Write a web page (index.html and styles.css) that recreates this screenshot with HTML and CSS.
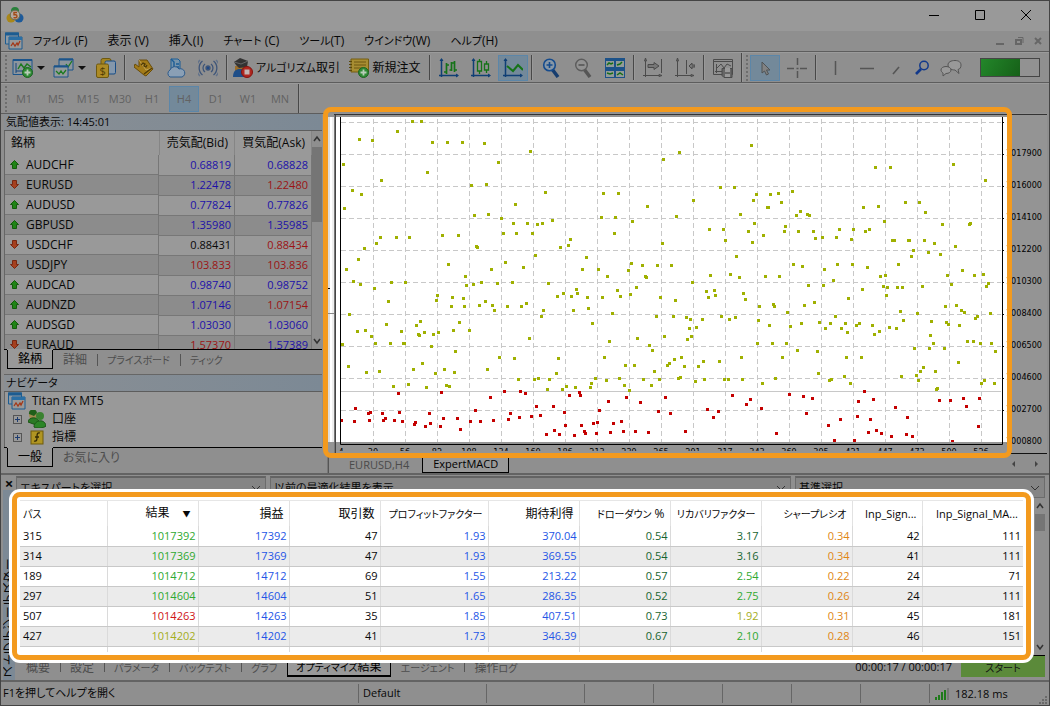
FILE: index.html
```
<!DOCTYPE html>
<html lang="ja">
<head>
  <meta charset="UTF-8" />
  <meta name="viewport" content="width=device-width, initial-scale=1.0"/>
  <title>Titan FX MT5</title>
  <link rel="stylesheet" href="styles.css">
</head>
<body>
<div class="app">

<header class="titlebar">
  <svg class="logo" viewBox="0 0 18 18"><circle cx="9" cy="5" r="4" fill="#27803a"/><circle cx="5" cy="12" r="4.500" fill="#a98718"/><circle cx="13" cy="12" r="4.500" fill="#1d5a9a"/><circle cx="9" cy="9" r="4.800" fill="#b5aaa0" stroke="#6a6a50"/><path d="M11 6.500H8v2.200h1.500c2 0 2 3 0 3H7.500" fill="none" stroke="#a34a16" stroke-width="1.400"/></svg>
  <div class="window-buttons">
    <button aria-label="最小化"><svg viewBox="0 0 12 12"><path d="M1 6.500h10"/></svg></button>
    <button aria-label="最大化"><svg viewBox="0 0 12 12"><path d="M1.500 1.500h9v9h-9z"/></svg></button>
    <button aria-label="閉じる"><svg viewBox="0 0 12 12"><path d="M1 1l10 10M11 1L1 11"/></svg></button>
  </div>
</header>

<nav class="menubar">
  <svg class="doc-icon" viewBox="0 0 18 18"><path d="M.5 1h13v11H.5z" fill="#8d9aa5" stroke="#1c5c91"/><path d="M0 2h14" stroke="#1c5c91" stroke-width="3"/><path d="M4 5h13v12H4z" fill="#999" stroke="#1c5c91"/><path d="M4 6.500h13" stroke="#2a6fa5" stroke-width="3"/><path d="M6 14l2-3 2 3 2-3 1 2 2-4" fill="none" stroke="#a33818" stroke-width="1.300"/></svg>
  <button><span class="kana">ファイル</span> (F)</button>
  <button>表示 (V)</button>
  <button>挿入(I)</button>
  <button><span class="kana">チャート</span> (C)</button>
  <button><span class="kana">ツール</span>(T)</button>
  <button><span class="kana">ウインドウ</span>(W)</button>
  <button><span class="kana">ヘルプ</span>(H)</button>
  <div class="child-buttons">
    <button aria-label="最小化"><svg viewBox="0 0 10 10"><path d="M1 8h8" stroke-width="2"/></svg></button>
    <button aria-label="元に戻す"><svg viewBox="0 0 10 10"><path d="M2 4h5v4H2z" stroke-width="2"/><path d="M4 1.500h5V7" stroke-width="1"/></svg></button>
    <button aria-label="閉じる"><svg viewBox="0 0 10 10"><path d="M2 2l6 6M8 2L2 8" stroke-width="2"/></svg></button>
  </div>
</nav>

<div class="toolbar">
  <span class="grip"></span>
  <button class="tool tool-drop" aria-label="新規チャート">
    <svg viewBox="0 0 22 20"><path d="M1 1.500h19v15H1z" fill="#8d959c" stroke="#1b548b"/><path d="M1 2h19" stroke="#1b548b" stroke-width="2"/><path d="M4 5v10M4 13h13" stroke="#17477d"/><path d="M6 11l3-5 3 4 3-4 4 3" fill="none" stroke="#1c7a20" stroke-width="1.400"/><circle cx="15.500" cy="14.500" r="5" fill="#2f8a34" stroke="#1c6420"/><path d="M12.500 14.500h6M15.500 11.500v6" stroke="#b9cdb9" stroke-width="1.800"/></svg>
    <svg class="arrow" viewBox="0 0 8 4"><path d="M0 0h8L4 4z"/></svg>
  </button>
  <button class="tool tool-drop" aria-label="チャート一覧">
    <svg viewBox="0 0 22 20"><path d="M6 1h14v11H6z" fill="#8d959c" stroke="#1b548b"/><path d="M6 1.500h14" stroke="#1b548b" stroke-width="2"/><path d="M13 6l2 3 4-6" fill="none" stroke="#1c7a20" stroke-width="1.300"/><path d="M1 8h14v11H1z" fill="#959a9d" stroke="#1b548b"/><path d="M1 8.500h14" stroke="#1b548b" stroke-width="2"/><path d="M3 13l3 3 2-3 2 3 3-4" fill="none" stroke="#1c7a20" stroke-width="1.300"/></svg>
    <svg class="arrow" viewBox="0 0 8 4"><path d="M0 0h8L4 4z"/></svg>
  </button>
  <button class="tool" aria-label="銘柄">
    <svg viewBox="0 0 20 20"><rect x="5" y=".5" width="10" height="13" rx="2" fill="#a48420" stroke="#6e5910"/><rect x="9" y="3" width="10.500" height="13" rx="1.500" fill="#8497ab" stroke="#174c86"/><rect x=".5" y="6" width="12" height="13.500" rx="1.500" fill="#ad8b25" stroke="#6e5910"/><text x="3.500" y="17" font-size="11" fill="#4d3c06">$</text></svg>
  </button>
  <span class="sep"></span>
  <button class="tool" aria-label="マーケット">
    <svg viewBox="0 0 20 20"><path d="M5 2h8l6 9-7 7-2-1L0 9l1-3 4 3z" fill="#a37b18" stroke="#6a4d0a"/><path d="M5 2l7 10 6-2" fill="none" stroke="#c1a255"/><path d="M7 7l2-2 2 1-1 2 2 1 1-2M10 16l8-6" fill="none" stroke="#4f3b08" stroke-width="1.300"/></svg>
  </button>
  <button class="tool" aria-label="VPS">
    <svg viewBox="0 0 20 20"><path d="M5 1h7l2 2v10H5z" fill="#7794ab" stroke="#1b5c96"/><path d="M5 1l3 3v9M10 6h3M10 9h3" fill="none" stroke="#1b5c96" stroke-width="1.400"/><path d="M4 19a4 4 0 010-7 5 5 0 019-1 4 4 0 013 8z" fill="#8a9fb5" stroke="#2b5a8c"/></svg>
  </button>
  <button class="tool" aria-label="シグナル">
    <svg viewBox="0 0 20 20" fill="none" stroke="#3e5579" stroke-width="1.300"><circle cx="10" cy="10" r="2" fill="#1f4884"/><path d="M7 6a5 5 0 000 8M13 6a5 5 0 010 8M4.500 3a9 9 0 000 14M15.500 3a9 9 0 010 14"/><path d="M2 2a11 11 0 000 16M18 2a11 11 0 010 16" stroke="#62728a"/></svg>
  </button>
  <span class="sep"></span>
  <button class="tool tool-algo">
    <svg viewBox="0 0 20 20"><path d="M2 8h10v5H2z" fill="#9b6d28"/><path d="M0 19c0-6 3-8 7-8s6 2 8 8z" fill="#1f4e88"/><path d="M7 0l8 3-1 6-8 1-3-3-2-3z" fill="#333"/><path d="M1 4l7 2 7-3" fill="none" stroke="#666"/><circle cx="14" cy="14" r="5.500" fill="#b02720" stroke="#84140f"/><path d="M11.500 11.500h5v5h-5z" fill="#c3b5b3"/></svg>
    <span><span class="kana">アルゴリズム</span>取引</span>
  </button>
  <button class="tool tool-order">
    <svg viewBox="0 0 20 20"><path d="M2 1h17.500v13H2z" fill="#a78d32" stroke="#745d10"/><path d="M0 3.500h3M0 6.500h3M0 9.500h3M0 12.500h3" stroke="#594809"/><path d="M5 4h12M5 7h12M5 10h8" stroke="#6c5713"/><circle cx="14.500" cy="14.500" r="5" fill="#2f8a34" stroke="#1c6420"/><path d="M11.500 14.500h6M14.500 11.500v6" stroke="#b9cdb9" stroke-width="1.800"/></svg>
    新規注文
  </button>
  <span class="sep"></span>
  <button class="tool" aria-label="バーチャート">
    <svg viewBox="0 0 20 20" fill="none"><path d="M2.500 1v18M0 17.500h19" stroke="#0f3f75" stroke-width="1.500"/><path d="M2.500 0l-2 3h4zM20 17.500l-3-2v4z" fill="#0f3f75"/><path d="M7.500 5v11M5 14h2.500M7.500 7H10M12.500 4v9M15.500 3v11M10.500 12h2M12.500 5h3M15.500 12H18" stroke="#157318" stroke-width="1.700"/></svg>
  </button>
  <button class="tool" aria-label="ローソク足">
    <svg viewBox="0 0 20 20" fill="none"><path d="M2.500 1v18M0 17.500h19" stroke="#0f3f75" stroke-width="1.500"/><path d="M2.500 0l-2 3h4zM20 17.500l-3-2v4z" fill="#0f3f75"/><path d="M8.500 1v2.500M8.500 13v3M6.500 3.500h4V13h-4zM15.500 3v3M15.500 12v3M13.500 6h4v6h-4z" stroke="#157318" stroke-width="1.300"/></svg>
  </button>
  <button class="tool tool-on" aria-label="ラインチャート">
    <svg viewBox="0 0 20 20" fill="none"><path d="M2.500 1v18M0 17.500h19" stroke="#0f3f75" stroke-width="1.500"/><path d="M2.500 0l-2 3h4zM20 17.500l-3-2v4z" fill="#0f3f75"/><path d="M4 8l6 5 5-6 5 5" stroke="#157318" stroke-width="2"/></svg>
  </button>
  <span class="sep"></span>
  <button class="tool" aria-label="拡大">
    <svg viewBox="0 0 20 20" fill="none"><path d="M11 11l6 8" stroke="#173d6e" stroke-width="3.500"/><circle cx="8.500" cy="7" r="5.800" fill="#8797a6" stroke="#154b8d" stroke-width="1.600"/><path d="M5.500 7h6M8.500 4v6" stroke="#154b8d" stroke-width="1.600"/></svg>
  </button>
  <button class="tool" aria-label="縮小">
    <svg viewBox="0 0 20 20" fill="none"><path d="M11 11l6 8" stroke="#555" stroke-width="3.500"/><circle cx="8.500" cy="7" r="5.800" fill="#929292" stroke="#5c5c5c" stroke-width="1.400"/><path d="M5.500 7h6" stroke="#555" stroke-width="1.600"/></svg>
  </button>
  <button class="tool" aria-label="整列">
    <svg viewBox="0 0 20 20" fill="none"><path d="M0 0h20v20H0z" fill="#1c5289"/><path d="M1 3h8v6H1zM11 3h8v6h-8zM1 13h8v6H1zM11 13h8v6h-8z" fill="#939b98"/><path d="M2 7l2-2 2 1 2-1M12 7l3-1 2-2M2 15l3 1 3-1M12 17l3-2 3 2" stroke="#176e1a" stroke-width="1.500"/></svg>
  </button>
  <span class="sep"></span>
  <button class="tool" aria-label="自動スクロール">
    <svg viewBox="0 0 20 20" fill="none" stroke="#4b4b4b"><path d="M2.500 1v18M0 17.500h19M18.500 1v14"/><path d="M2.500 0l-1 3h2zM19 17.500l-3-1v2zM5 6.500h6v-2l5 3.500-5 3.500v-2H5z" fill="#777"/></svg>
  </button>
  <button class="tool" aria-label="チャートシフト">
    <svg viewBox="0 0 20 20" fill="none" stroke="#4b4b4b"><path d="M2.500 1v18M0 17.500h19M11.500 2v14"/><path d="M2.500 0l-1 3h2zM19 17.500l-3-1v2zM14 8l3-3v2h3v2h-3v2z" fill="#777"/></svg>
  </button>
  <span class="sep"></span>
  <button class="tool" aria-label="テンプレート">
    <svg viewBox="0 0 20 20" fill="none" stroke="#4b4b4b"><path d="M.5 1.500h19v15H.5zM1 3.500h18M3.500 6v9M2 13.500h10M4 10l4-4 3 4 3-4 4 2"/><path d="M9 10.500h10v9h-8l-2-2z" fill="#666"/><path d="M12 10h5v4h-5zM12 16h5v3h-5z" fill="#999" stroke="none"/></svg>
  </button>
  <span class="sep sep-end"></span>
  <span class="grip"></span>
  <button class="tool tool-on" aria-label="カーソル">
    <svg viewBox="0 0 20 20"><path d="M7 4v11l2.500-2 2 4 2-1-2-4H15z" fill="#828282" stroke="#4f5355"/></svg>
  </button>
  <button class="tool" aria-label="十字線">
    <svg viewBox="0 0 20 20"><path d="M10.500 0v7M10.500 13v7M0 10.500h7M13 10.500h7M9.500 10.500h2" stroke="#555" stroke-width="1.500"/></svg>
  </button>
  <span class="sep"></span>
  <button class="tool" aria-label="垂直線">
    <svg viewBox="0 0 20 20"><path d="M10.500 3v14" stroke="#555" stroke-width="1.500"/></svg>
  </button>
  <button class="tool" aria-label="水平線">
    <svg viewBox="0 0 20 20"><path d="M3 10.500h14" stroke="#555" stroke-width="1.500"/></svg>
  </button>
  <button class="tool tool-thin" aria-label="トレンドライン">
    <svg viewBox="0 0 20 20"><path d="M7 16l6-7" stroke="#555" stroke-width="1.600"/></svg>
  </button>
  <button class="tool tool-thin" aria-label="検索">
    <svg viewBox="0 0 20 20" fill="none"><path d="M9 11l-5 5" stroke="#12398b" stroke-width="2.600"/><circle cx="12" cy="7.500" r="4.200" stroke="#12398b" stroke-width="1.500"/></svg>
  </button>
  <button class="tool tool-chat" aria-label="チャット">
    <svg viewBox="0 0 22 20" fill="#999" stroke="#555"><path d="M8 7c0-3 3-4.500 7-4.500s6 2 6 4.500-1 4-3 4.500l1 4-4-3.500c-4 0-7-2-7-5z"/><path d="M1 12c0-2 2-3.500 5-3.500s5 1.500 5 3.500-2 3.500-5 3.500L3 18v-3c-1-.5-2-2-2-3z"/></svg>
  </button>
  <div class="gauge"><span></span></div>
</div>

<div class="toolbar timeframes">
  <span class="grip"></span>
  <button>M1</button>
  <button>M5</button>
  <button>M15</button>
  <button>M30</button>
  <button>H1</button>
  <button class="tool-on">H4</button>
  <button>D1</button>
  <button>W1</button>
  <button>MN</button>
  <span class="sep sep-end"></span>
</div>

<main class="workspace">
  <aside class="sidebar">
    <section class="panel market">
      <h2>気配値表示: 14:45:01</h2>
      <div class="market-body">
        <table class="quotes">
          <thead><tr><th>銘柄</th><th>売気配(Bid)</th><th>買気配(Ask)</th></tr></thead>
          <tbody id="quotes"></tbody>
        </table>
        <div class="scrollbar">
          <svg viewBox="0 0 10 10"><path d="M2 7l3-4 3 4"/></svg>
          <span class="thumb"></span>
          <svg viewBox="0 0 10 10"><path d="M2 3l3 4 3-4"/></svg>
        </div>
      </div>
      <div class="tabs">
        <button class="active">銘柄</button><button>詳細</button><button class="kana">プライスボード</button><button class="kana">ティック</button>
      </div>
    </section>
    <section class="panel navigator">
      <h2><span class="kana">ナビゲータ</span></h2>
      <ul class="tree">
        <li class="root"><svg viewBox="0 0 18 18"><path d="M.5 1h13v11H.5z" fill="#8d9aa5" stroke="#1c5c91"/><path d="M0 2h14" stroke="#1c5c91" stroke-width="3"/><path d="M4 5h13v12H4z" fill="#999" stroke="#1c5c91"/><path d="M4 6.500h13" stroke="#2a6fa5" stroke-width="3"/><path d="M6 14l2-3 2 3 2-3 1 2 2-4" fill="none" stroke="#a33818" stroke-width="1.300"/></svg>Titan FX MT5</li>
        <li><span class="plus"></span><svg viewBox="0 0 18 18"><circle cx="5" cy="5" r="4" fill="#a28a50"/><path d="M1 4a4 4 0 018-1L6 6z" fill="#205f1a"/><path d="M0 12c0-5 10-6 11 0l-3 3z" fill="#2b7a25" stroke="#1c5417"/><circle cx="12" cy="6" r="4" fill="#3a8230"/><path d="M6 17c0-7 11-9 12-1-2 2-9 3-12 1z" fill="#2c8527" stroke="#1c5417"/></svg>口座</li>
        <li><span class="plus"></span><svg viewBox="0 0 18 18"><rect x="3" y="3" width="12" height="13" fill="#b09522" stroke="#6f5b0b"/><path d="M12 5c-3-1-3 2-3 4s0 5-3 4M7 9h4" fill="none" stroke="#352b04" stroke-width="1.300"/></svg>指標</li>
      </ul>
      <div class="tabs">
        <button class="active">一般</button><button>お気に入り</button>
      </div>
    </section>
  </aside>

  <section class="chart-pane">
    <div class="chart">
      <svg id="chart" viewBox="8 13 719 340" role="img" aria-label="オプティマイズ結果グラフ"></svg>
      <div class="frame"></div>
    </div>
    <div class="chart-tabs">
      <button>EURUSD,H4</button>
      <button class="active">ExpertMACD</button>
      <span class="chart-arrows"><svg viewBox="0 0 6 8"><path d="M4 1v6L1 4z"/></svg><svg viewBox="0 0 6 8"><path d="M2 1v6l3-3z"/></svg></span>
    </div>
  </section>
</main>

<section class="tester">
  <div class="tester-side">
    <button aria-label="閉じる">×</button>
    <span>ストラテジーテスター</span>
  </div>
  <div class="tester-main">
    <div class="filters">
      <select aria-label="エキスパート"><option>エキスパートを選択</option></select>
      <select aria-label="最適化結果"><option>以前の最適化結果を表示</option></select>
      <select aria-label="基準"><option>基準選択</option></select>
    </div>
    <div class="results-area">
      <div class="scrollbar">
        <svg viewBox="0 0 10 10"><path d="M2 7l3-4 3 4"/></svg>
        <span class="thumb"></span>
        <svg viewBox="0 0 10 10"><path d="M2 3l3 4 3-4"/></svg>
      </div>
      <div class="frame results-frame">
        <div class="results-scroll">
          <table class="results">
            <colgroup><col class="c-pass"><col><col><col><col class="c-factor"><col><col><col><col><col class="c-sign"><col class="c-macd"></colgroup>
            <thead><tr>
              <th><span class="kana">パス</span></th><th class="sorted">結果<span class="sort">▼</span></th><th>損益</th><th>取引数</th><th><span class="kana">プロフィットファクター</span></th><th>期待利得</th><th><span class="kana">ドローダウン</span> %</th><th><span class="kana">リカバリファクター</span></th><th><span class="kana">シャープレシオ</span></th><th class="en">Inp_Sign...</th><th class="en">Inp_Signal_MA...</th>
            </tr></thead>
            <tbody id="results"></tbody>
          </table>
        </div>
      </div>
    </div>
    <div class="tabs tester-tabs">
      <button>概要</button><button>設定</button><button class="kana">パラメータ</button><button class="kana">バックテスト</button><button class="kana">グラフ</button><button class="active"><span class="kana">オプティマイズ</span>結果</button><button class="kana">エージェント</button><button>操作<span class="kana">ログ</span></button>
      <span class="timer">00:00:17 / 00:00:17</span>
      <button class="start"><span class="kana">スタート</span></button>
    </div>
  </div>
</section>

<footer class="statusbar">
  <span class="help">F1を押してヘルプを開く</span>
  <span class="profile">Default</span>
  <span class="s-wide"></span><span></span><span></span><span></span><span></span><span></span>
  <span class="ping"><svg viewBox="0 0 15 12"><path d="M1 12V9h2v3zM4 12V7h2v5zM7 12V4h2v8zM10 12V2h2v10z" fill="#1f7a1b"/><path d="M13 12V0h2v12z" fill="#777"/></svg>182.18 ms</span>
  <svg class="corner" viewBox="0 0 9 9"><path d="M6 0h2v2H6zM3 3h2v2H3zM6 3h2v2H6zM0 6h2v2H0zM3 6h2v2H3zM6 6h2v2H6z"/></svg>
</footer>

</div>
<script src="script.js"></script>
</body>
</html>
```
FILE: styles.css
```
* { box-sizing: border-box; }
body { margin: 0; font-family: "Open Sans", "Noto Sans CJK JP", sans-serif; font-size: 12px; line-height: 16px; color: #080808; background: #8f8f8f; font-feature-settings: "palt"; }
button, select { font: inherit; font-feature-settings: inherit; color: inherit; background: none; border: 0; padding: 0; margin: 0; white-space: nowrap; }
svg { display: block; flex: none; }
.kana { font-size: 10px; }
.app { display: flex; flex-direction: column; height: 100vh; min-height: 706px; border: 1px solid #444; overflow: hidden; position: relative; }

/* Title and menu */
.titlebar { display: flex; align-items: center; justify-content: space-between; height: 30px; background: #999; padding: 0 17px 2px 5px; flex: none; }
.logo { width: 18px; height: 18px; }
.window-buttons { display: flex; gap: 34px; }
.window-buttons svg { width: 12px; height: 12px; fill: none; stroke: #000; }
.menubar { display: flex; align-items: center; gap: 20px; height: 20px; padding: 0 6px 0 4px; flex: none; }
.menubar .kana, .tool .kana, .panel h2 .kana { font-size: 11px; }
.doc-icon { width: 18px; height: 18px; margin-right: -10px; }
.child-buttons { margin-left: auto; display: flex; gap: 9px; }
.child-buttons svg { width: 10px; height: 10px; fill: none; stroke: #666; }

/* Toolbars */
.toolbar { display: flex; align-items: center; gap: 2px; height: 31px; padding: 1px 9px 0 4px; border-top: 1px solid #5d5d5d; box-shadow: inset 0 1px #9b9b9b; flex: none; }
.grip { width: 2px; height: 26px; background: repeating-linear-gradient(#6e6e6e 0 2px, transparent 2px 4px); flex: none; }
.sep { width: 2px; height: 25px; margin: 0 1px; border-left: 1px solid #484848; border-right: 1px solid #999; flex: none; }
.sep-end { height: 30px; }
.tool { display: flex; align-items: center; justify-content: center; gap: 3px; width: 30px; height: 26px; flex: none; }
.tool svg { width: 20px; height: 20px; }
.tool-drop { width: 39px; }
.tool-drop svg:first-child, .tool-chat svg { width: 22px; }
.tool .arrow { width: 8px; height: 4px; fill: #111; }
.tool-algo { width: 111px; }
.tool-order { width: 82px; }
.tool-on { background: #73899a; box-shadow: inset 0 0 0 1px #5c86a8; }
.tool-thin { width: 24px; }
.gauge { width: 60px; height: 19px; margin-left: auto; border: 1px solid #454545; background: #929292; flex: none; }
.gauge span { display: block; width: 67%; height: 100%; background: linear-gradient(120deg, #23872a, #166018); }
.timeframes button { width: 30px; height: 26px; color: #626262; font-size: 11px; }

/* Work area */
.workspace { display: grid; grid-template-columns: 327px minmax(0, 1fr); flex: 1; min-height: 0; padding-right: 2px; border-bottom: 2px solid #636363; }
.sidebar { display: flex; flex-direction: column; min-height: 0; border-top: 1px solid #5d5d5d; padding: 0 5px 0 3px; border-right: 1px solid #777; }
.panel { display: flex; flex-direction: column; min-height: 0; }
.panel h2 { margin: 0; height: 17px; padding-left: 2px; font-size: 11px; line-height: 16px; font-weight: 400; background: linear-gradient(90deg, #8a8f94, #7c8995); border-bottom: 1px solid #5d5d5d; flex: none; }
.market { flex: 1; }
.market-body { display: flex; flex: 1; min-height: 0; overflow: hidden; border-left: 1px solid #666; }
.quotes { flex: 1; align-self: flex-start; border-collapse: collapse; table-layout: fixed; background: #999; }
.quotes th { height: 24px; padding: 0 6px; font-weight: 400; text-align: right; border-right: 1px solid #858585; }
.quotes th:first-child { width: 154px; text-align: left; }
.quotes td { height: 20px; padding: 0 3px; text-align: right; font-size: 11px; border-right: 1px solid #777; border-bottom: 1px solid #777; }
.quotes td:first-child { display: flex; align-items: center; gap: 7px; padding-left: 5px; font-size: 12px; }
.quotes tr:nth-child(even) td { background: #8c8c8c; }
.quotes svg { width: 9px; height: 9px; }
.up { color: #1c11a8; }
.down { color: #9b1414; }
.i-up { fill: #1f8415; stroke: #135c0c; }
.i-down { fill: #a5401f; stroke: #782711; }
.scrollbar { display: flex; flex-direction: column; width: 10px; background: #8f8f8f; }
.scrollbar svg { width: 10px; height: 16px; fill: none; stroke: #333; stroke-width: 1.5px; }
.thumb { height: 75px; background: #757575; }
.scrollbar svg:last-child { margin-top: auto; }
.tabs { display: flex; align-items: flex-start; height: 25px; padding-left: 3px; border-top: 1px solid #000; flex: none; }
.tabs button { height: 19px; padding: 0 10px; color: #4d4d4d; }
.tabs button + button { background: linear-gradient(#555, #555) no-repeat 0 4px / 1px 12px; }
.tabs .active, .tabs .active + button { background: none; }
.tabs .active { background: #999; border: 1px solid #000; border-top: 0; color: #000; box-shadow: 0 -1px #999; }
.navigator { border-top: 1px solid #666; }
.navigator .tabs { height: 26px; }
.tree { list-style: none; margin: 0; padding: 0 0 1px 3px; border-left: 1px solid #666; background: #999; }
.tree li { display: flex; align-items: center; gap: 6px; height: 18px; padding-left: 5px; }
.tree .root { padding-left: 0; }
.tree svg { width: 18px; height: 18px; }
.plus { width: 9px; height: 9px; border: 1px solid #555; background: linear-gradient(#1d3c70, #1d3c70) center / 5px 1px no-repeat, linear-gradient(#1d3c70, #1d3c70) center / 1px 5px no-repeat; }

/* Chart */
.chart-pane { min-width: 0; }
.chart { position: relative; }
.chart > svg { width: 100%; height: auto; }
.frame { position: absolute; inset: -6px 35px -5px -5px; border: 5px solid #f39a1e; border-radius: 8px; z-index: 2; }
#chart text { font-family: "DejaVu Sans Condensed", "Open Sans", sans-serif; font-size: 9px; fill: #000; }
.grid-line { stroke: #c8c8c8; stroke-dasharray: 5 3; }
.good { fill: #9fb000; }
.bad { fill: #c40000; }
.chart-tabs { display: flex; height: 20px; padding: 0 8px 0 10px; border-top: 1px solid #111; border-left: 1px solid #555; }
.chart-tabs button { height: 19px; padding: 2px 10px 0; font-size: 11px; color: #4a4a4a; }
.chart-tabs .active { border: 1px solid #000; border-top: 0; margin-left: 3px; background: #999; color: #000; }
.chart-arrows { display: flex; align-items: center; gap: 16px; margin-left: auto; }
.chart-arrows svg { width: 6px; height: 8px; fill: #444; }

/* Strategy tester */
.tester { display: flex; height: 207px; padding: 1px 4px 0 2px; border-bottom: 2px solid #636363; flex: none; }
.tester-side { display: flex; flex-direction: column; justify-content: space-between; align-items: center; width: 12px; margin-right: 1px; background: linear-gradient(#8f8f8f 14px, #7c8995 14px); overflow: hidden; }
.tester-side button { height: 14px; line-height: 14px; font-size: 15px; font-weight: 700; }
.tester-side span { writing-mode: vertical-rl; transform: rotate(180deg); line-height: 12px; white-space: nowrap; padding-top: 2px; }
.tester-main { flex: 1; min-width: 0; display: flex; flex-direction: column; }
.filters { display: grid; grid-template-columns: 250px 1fr 250px; gap: 4px; height: 22px; flex: none; }
.filters select { appearance: none; height: 22px; padding: 0 3px; border: 1px solid #6c6c6c; border-top: 2px solid #636363; background: #858585 url("data:image/svg+xml,%3Csvg xmlns='http://www.w3.org/2000/svg' viewBox='0 0 10 6'%3E%3Cpath d='M1 1l4 4 4-4' fill='none' stroke='%23333'/%3E%3C/svg%3E") no-repeat right 4px top 7px / 10px 6px; border-radius: 0; font-size: 11px; }
.results-area { position: relative; flex: 1; min-height: 0; display: flex; justify-content: flex-end; }
.results-area .thumb { height: 17px; }
.results-frame { inset: -6px 14px -5px -4px; padding: 3px; background: #fff; box-shadow: 0 0 0 3px #fff; }
.results-scroll { height: 100%; overflow: hidden; border-top: 1px solid #e6e6e6; }
.results { width: 100%; table-layout: fixed; border-collapse: collapse; }
.results col { width: 91px; }
.results .c-pass { width: 87px; }
.results .c-factor { width: 108px; }
.results .c-sign { width: 70px; }
.results .c-macd { width: 101px; }
.results th { height: 25px; padding: 0 5px; font-weight: 400; text-align: right; white-space: nowrap; border-right: 1px solid #e2e2e2; }
.results .en { font-size: 11px; }
.sort { margin-left: 13px; font-size: 8px; }
.results .sorted { padding-right: 7px; }
.results td { height: 20px; padding: 0 2px 0 3px; font-size: 11px; text-align: right; border-right: 1px solid #dadada; border-bottom: 1px solid #c8c8c8; }
.results th:first-child, .results td:first-child { padding-left: 3px; text-align: left; }
.results th:last-child, .results td:last-child { border-right: 0; }
.results tbody tr:nth-child(even) { background: #ebebeb; }
.blue { color: #2455e6; }
.green { color: #2fa82f; }
.dark { color: #17642f; }
.olive { color: #a3ad1c; }
.orange { color: #e08614; }
.red { color: #cf1414; }
.tester-tabs { height: 25px; padding-left: 0; align-items: stretch; }
.tester-tabs button { height: 21px; padding: 2px 10px 0; }
.tester-tabs .active { padding: 2px 8px 0; border-width: 0 1px 2px; }
.timer { margin-left: auto; padding: 3px 9px 0 0; font-size: 11px; }
.tabs .start { width: 84px; background: #5b8a3a; color: #111; }

/* Status bar */
.statusbar { display: flex; align-items: center; height: 23px; padding: 0 1px 0 2px; flex: none; }
.statusbar span { height: 19px; width: 69px; padding: 1px 4px; border-left: 1px solid #666; }
.statusbar .help { flex: 1; padding-left: 0; border: 0; font-size: 11px; }
.statusbar .profile { width: 128px; font-size: 11px; }
.statusbar .s-wide { width: 98px; }
.statusbar .ping { display: flex; align-items: center; gap: 6px; width: 110px; font-size: 11px; }
.ping svg { width: 15px; height: 12px; }
.corner { width: 9px; height: 9px; fill: #6a6a6a; align-self: flex-end; }
```
FILE: script.js
```
const quotes = [
  ["AUDCHF", 1, "0.68819", "up", "0.68828", "up"],
  ["EURUSD", 0, "1.22478", "up", "1.22480", "down"],
  ["AUDUSD", 1, "0.77824", "up", "0.77826", "up"],
  ["GBPUSD", 1, "1.35980", "up", "1.35985", "up"],
  ["USDCHF", 0, "0.88431", "", "0.88434", "down"],
  ["USDJPY", 0, "103.833", "down", "103.836", "down"],
  ["AUDCAD", 1, "0.98740", "up", "0.98752", "up"],
  ["AUDNZD", 1, "1.07146", "up", "1.07154", "down"],
  ["AUDSGD", 1, "1.03030", "up", "1.03060", "up"],
  ["EURAUD", 0, "1.57370", "down", "1.57389", "up"]
];

const arrows = {
  1: '<svg class="i-up" viewBox="0 0 9 9"><path d="M4.5.5l4 4h-2v4h-4v-4h-2z"/></svg>',
  0: '<svg class="i-down" viewBox="0 0 9 9"><path d="M4.5 8.5l4-4h-2v-4h-4v4h-2z"/></svg>'
};

document.getElementById("quotes").innerHTML = quotes.map(q => `
  <tr><td>${arrows[q[1]]}${q[0]}</td><td class="${q[3]}">${q[2]}</td><td class="${q[5]}">${q[4]}</td></tr>
`).join("");

// cells, result color, recovery factor color
const results = [
  [["315", "1017392", "17392", "47", "1.93", "370.04", "0.54", "3.17", "0.34", "42", "111"], "green", "dark"],
  [["314", "1017369", "17369", "47", "1.93", "369.55", "0.54", "3.16", "0.34", "41", "111"], "green", "dark"],
  [["189", "1014712", "14712", "69", "1.55", "213.22", "0.57", "2.54", "0.22", "24", "71"], "green", "green"],
  [["297", "1014604", "14604", "51", "1.65", "286.35", "0.52", "2.75", "0.26", "24", "111"], "green", "green"],
  [["507", "1014263", "14263", "35", "1.85", "407.51", "0.73", "1.92", "0.31", "45", "181"], "red", "olive"],
  [["427", "1014202", "14202", "41", "1.73", "346.39", "0.67", "2.10", "0.28", "46", "151"], "olive", "green"],
  [["426", "1013724", "13724", "42", "1.67", "326.76", "0.66", "1.43", "0.27", "45", "151"], "olive", "orange"]
];

document.getElementById("results").innerHTML = results.map(([cells, result, recovery]) => {
  const colors = ["", result, "blue", "", "blue", "blue", "dark", recovery, "orange", "", ""];
  return "<tr>" + cells.map((c, i) => `<td class="${colors[i]}">${c}</td>`).join("") + "</tr>";
}).join("");

// Optimization passes, x y pairs in chart units
const good = `92 21 101 21 39 39 52 40 77 31 112 42 127 42 142 42 164 43 210 51 178 62 23 64 107 72 61 80 151 85 166 84 32 90 41 94 24 108 225 92
195 104 154 115 168 114 181 118 193 123 207 123 217 124 222 123 232 120 183 133 196 133 212 133 60 137 76 137 89 137 122 135 138 135 56 143 44 148
156 146 157 147 215 155 38 159 26 169 128 164 185 162 203 167 171 169 145 176 33 181 40 184 71 182 85 182 146 185 153 184 161 182 177 183 192 182
228 183 54 188 431 45 359 52 343 59 283 93 298 93 327 106 400 87 414 87 373 100 436 94 450 94 458 93 433 100 461 102 447 107 448 107 281 117 295 117
312 121 356 116 420 114 434 123 389 129 403 129 428 131 465 126 464 131 443 135 405 140 432 142 294 133 250 139 248 145 240 147 342 143 266 157
416 156 262 169 278 169 287 176 311 163 308 170 322 165 337 165 351 165 325 176 326 177 390 175 410 174 419 177 445 176 459 176 372 182 316 187
256 189 297 190 394 190 472 91 555 67 570 67 633 64 665 80 480 111 476 115 487 114 489 115 543 107 558 106 564 121 585 102 599 102 605 112 622 124
649 124 650 123 478 131 493 131 495 138 502 137 516 137 519 129 533 129 531 139 545 131 549 129 572 140 574 140 588 140 589 140 604 140 614 143
635 146 593 150 608 152 620 154 591 156 473 164 482 166 504 169 517 164 532 164 547 167 578 164 513 180 560 176 565 175 642 170 627 175 654 175
663 174 488 185 503 185 542 189 563 186 567 187 577 187 582 187 602 186 631 184 666 186 668 183 68 201 117 195 116 200 132 197 131 206 143 198
144 206 159 205 165 201 172 205 174 210 187 206 201 206 206 203 223 210 221 216 237 196 29 214 66 224 96 225 100 221 139 222 37 231 45 230 51 236
81 231 98 234 99 235 104 232 113 234 118 232 133 230 149 230 209 238 22 244 55 243 70 243 83 243 84 243 111 246 135 251 179 257 194 258 238 258
102 263 28 266 46 272 59 271 93 269 115 273 124 269 134 272 167 269 236 273 198 279 214 279 218 278 229 279 73 286 88 284 106 287 126 285 129 286
227 289 243 193 251 196 257 193 267 197 253 210 268 208 282 197 292 213 300 196 310 194 272 223 340 197 355 200 336 216 353 216 366 217 370 219
369 228 376 227 382 219 386 191 388 197 395 195 401 216 409 219 415 217 423 193 425 199 439 206 453 204 454 206 438 220 449 225 467 212 470 226
289 241 317 238 344 236 367 239 371 236 329 245 332 250 437 243 452 243 466 243 284 257 305 265 314 265 334 271 347 265 349 263 354 259 361 257
364 266 378 266 383 261 399 261 421 257 462 257 275 278 286 280 299 278 271 283 270 287 255 287 246 286 242 289 304 285 309 290 323 279 331 285
339 279 358 278 360 277 375 281 384 279 404 279 408 279 422 279 442 283 455 278 484 205 494 202 481 223 499 222 505 228 510 223 515 216 528 198
525 223 521 228 527 232 536 225 539 223 552 225 554 234 559 231 566 195 569 227 576 228 580 211 583 220 597 213 611 221 610 235 613 243 609 248
594 248 624 248 625 206 636 205 626 222 628 224 639 225 641 210 644 212 655 218 657 216 670 213 647 241 653 241 660 243 671 243 675 251 477 250
497 251 526 257 541 257 638 262 603 267 600 271 615 271 596 275 598 280 581 276 498 273 509 280 511 279 524 276 530 283 616 289 617 288 661 283
664 280 674 283`;

const bad = `78 293 121 292 184 291 200 291 205 293 170 297 35 308 155 310 216 306 233 306 48 313 50 312 62 313 79 312 109 313 190 313 21 320 34 321
49 320 63 320 65 318 74 320 82 321 94 324 95 322 105 326 110 323 120 326 123 318 137 318 140 329 150 321 160 321 173 320 188 319 199 317 211 316
220 315 226 334 234 330 239 334 259 292 260 295 249 295 306 297 288 301 320 302 345 297 244 312 279 310 338 311 350 313 245 325 261 325 273 323
277 322 293 323 301 321 264 331 265 333 254 335 276 333 290 332 303 331 315 331 328 332 365 331 387 309 398 311 393 317 412 295 430 299 426 304
441 308 456 333 469 294 483 296 492 298 486 313 544 291 538 301 553 299 520 319 508 325 537 316 550 319 548 332 556 330 561 333 571 336 575 307
587 317 586 334 592 336 514 340 534 340 619 300 630 300 643 298 646 306 659 298 658 326 632 341`;

const xLabels = [4, 30, 56, 82, 108, 134, 160, 186, 213, 239, 265, 291, 317, 343, 369, 395, 421, 447, 473, 500, 526];
const yLabels = ["1017900", "1016000", "1014100", "1012200", "1010300", "1008400", "1006500", "1004600", "1002700", "1000800"];

function dots(text, cls){
  const n = text.trim().split(/\s+/).map(Number);
  let d = "";
  for (let i = 0; i < n.length; i += 2) d += `M${n[i]-1} ${n[i+1]-1}h3v3h-3z`;
  return `<path class="${cls}" d="${d}"/>`;
}

function drawChart(){
  let s = `
    <rect x="8" y="13" width="719" height="340" fill="#949494"/>
    <rect x="8" y="17" width="679" height="325" fill="#fff"/>
    <rect x="8" y="17" width="2" height="325" fill="#ddd"/>
    <rect x="12" y="17" width="2" height="325" fill="#eee"/>
    <rect x="14" y="14" width="1" height="339" fill="#777"/>
    <rect x="15" y="14" width="1" height="339" fill="#444"/>
    <rect x="8" y="213" width="6" height="1" fill="#888"/>
    <rect x="8" y="188" width="2" height="1" fill="#000"/>
    <rect x="14" y="14" width="713" height="1" fill="#333"/>
    <path d="M21 291.500H681" stroke="#c8c8c8"/>`;
  for (let x = 53; x <= 661; x += 32) s += `<path class="grid-line" d="M${x+.5} 19V342"/>`;
  for (let y = 22; y <= 310; y += 32) s += `<path class="grid-line" d="M21 ${y+.5}H681"/><path d="M682 ${y+.5}h2" stroke="#000"/>`;
  s += dots(good, "good") + dots(bad, "bad");
  s += `<rect x="16" y="342" width="671" height="11" fill="#949494"/>
    <path d="M20.500 17V344.500H682.500V17" fill="none" stroke="#000"/>
    <clipPath id="cut"><rect x="8" y="345" width="700" height="6"/></clipPath><g clip-path="url(#cut)" text-anchor="middle">`;
  xLabels.forEach((t, i) => s += `<text x="${21+i*32}" y="355">${t}</text>`);
  s += `</g><g text-anchor="end">`;
  yLabels.forEach((t, i) => s += `<text x="722" y="${56+i*32}">${t}</text>`);
  document.getElementById("chart").innerHTML = s + "</g>";
}

drawChart();
```
